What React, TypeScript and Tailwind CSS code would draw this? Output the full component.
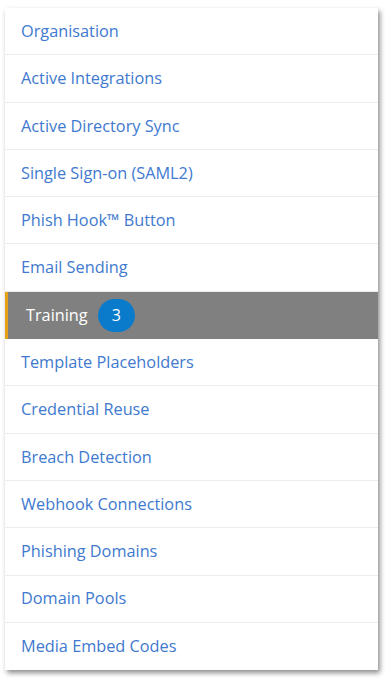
import React from 'react';

const items = [
  'Organisation',
  'Active Integrations',
  'Active Directory Sync',
  'Single Sign-on (SAML2)',
  'Phish Hook™ Button',
  'Email Sending',
  'Training',
  'Template Placeholders',
  'Credential Reuse',
  'Breach Detection',
  'Webhook Connections',
  'Phishing Domains',
  'Domain Pools',
  'Media Embed Codes',
];

export default function App() {
  return (
    <div className="min-h-[682px] bg-white pt-[8px] pl-[5px]" style={{ fontFamily: '"Open Sans", sans-serif' }}>
      <div className="w-[373px] bg-white shadow-[2px_3px_5px_rgba(0,0,0,0.45)]">
        {items.map((label, i) => {
          const active = label === 'Training';
          const last = i === items.length - 1;
          if (active) {
            return (
              <div
                key={label}
                className="flex h-[47.3px] items-center border-l-[3px] border-[#e5a11b] bg-[#808080] pl-[18px] text-[16.3px] text-white"
              >
                <span>{label}</span>
                <span className="ml-[10px] flex h-[33px] w-[37px] items-center justify-center rounded-full bg-[#0a7acb] text-[16px] text-white">
                  3
                </span>
              </div>
            );
          }
          return (
            <div
              key={label}
              className={`flex h-[47.3px] items-center pl-[16px] text-[16.3px] text-[#4079cf] ${last ? '' : 'border-b border-[#ececec]'}`}
            >
              {label}
            </div>
          );
        })}
      </div>
    </div>
  );
}
